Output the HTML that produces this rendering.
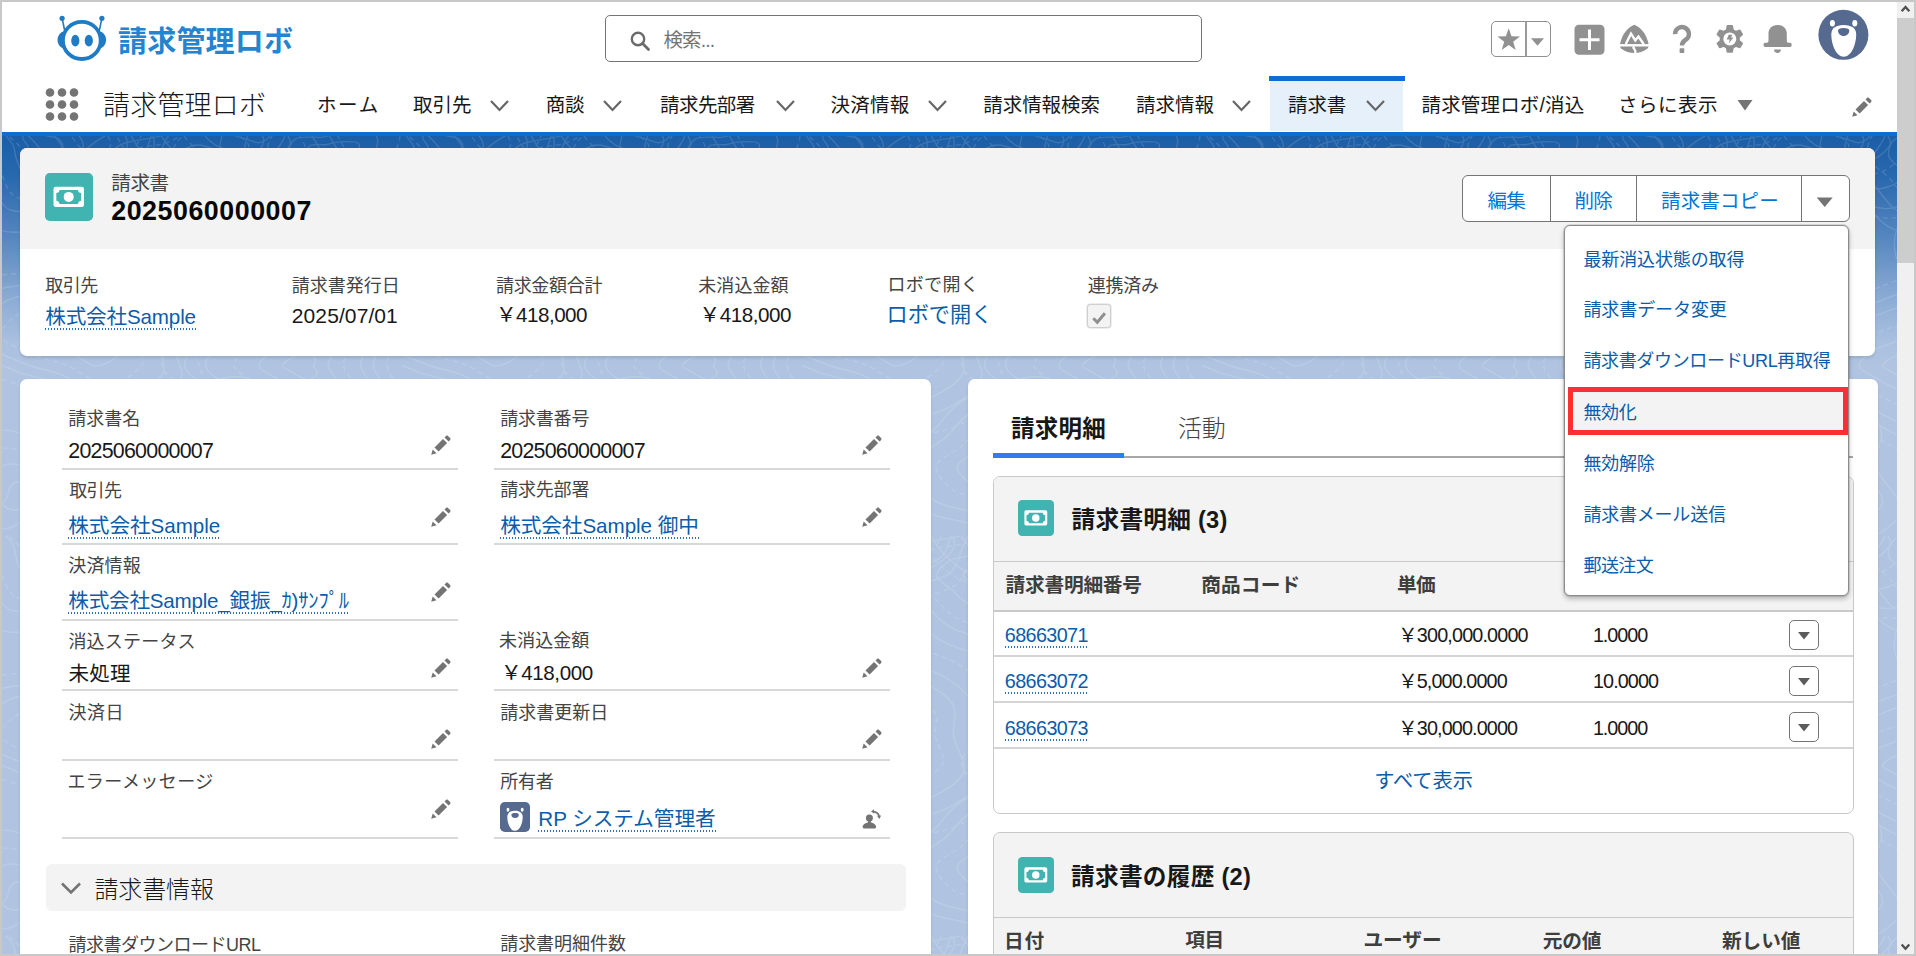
<!DOCTYPE html>
<html lang="ja">
<head>
<meta charset="utf-8">
<title>請求書 2025060000007 | 請求管理ロボ</title>
<style>

*{box-sizing:border-box;margin:0;padding:0}
html,body{width:1916px;height:956px;overflow:hidden;background:#fff}
body{font-family:"Liberation Sans","Noto Sans CJK JP",sans-serif;color:#181818;position:relative}
.abs{position:absolute}
.t{position:absolute;white-space:nowrap;line-height:1}
a{color:#0b5cab;text-decoration:none}
#frame{position:absolute;left:0;top:0;width:1916px;height:956px;border:2px solid #c8c8c8;pointer-events:none;z-index:100}
#hdr{position:absolute;left:2px;top:2px;width:1895px;height:130px;background:#fff}
#blueline{position:absolute;left:2px;top:132px;width:1895px;height:4px;background:#0b6dd6}
#bg{position:absolute;left:2px;top:136px;width:1895px;height:818px;background:linear-gradient(to bottom,#1b5ea6 0px,#2868ad 40px,#5486bf 100px,#8aaad4 160px,#a9c0df 205px,#b0c4e1 230px,#b0c4e1 100%)}
#sb{position:absolute;left:1897px;top:2px;width:17px;height:952px;background:#f0f0f0}
#sb .thumb{position:absolute;left:0;top:16px;width:17px;height:245px;background:#cdcdcd}
.card{position:absolute;background:#fff;border-radius:7px}
.lnk{color:#0b5cab;padding-bottom:2px;background-image:repeating-linear-gradient(90deg,#2f6fba 0,#2f6fba 1.4px,rgba(255,255,255,0) 1.4px,rgba(255,255,255,0) 3px);background-size:100% 2px;background-position:0 100%;background-repeat:no-repeat}
.ul{position:absolute;height:2px;background:#d8d8d8}

</style>
</head>
<body>
<div id="hdr"></div><div id="blueline"></div><div id="bg"></div>
<svg class="abs" style="left:2px;top:136px" width="1895" height="818" viewBox="0 0 1895 818"><defs><pattern id="tp" width="400" height="400" patternUnits="userSpaceOnUse"><g fill="none" stroke="#fff" stroke-width="1.300" opacity="0.130"><path d="M60.6 10.0 C60.2 12.3 55.6 14.2 53.2 16.4 C50.8 18.6 49.9 21.7 46.4 23.2 C43.0 24.7 35.6 26.7 32.4 25.5 C29.2 24.4 28.3 18.8 27.2 16.2 C26.0 13.6 26.8 12.6 25.7 10.0 C24.7 7.4 19.6 3.1 20.8 0.7 C22.0 -1.7 29.0 -4.2 33.0 -4.4 C37.0 -4.5 41.2 -1.3 44.9 -0.1 C48.7 1.0 53.0 0.7 55.6 2.4 C58.3 4.1 61.0 7.7 60.6 10.0"/><path d="M81.3 10.0 C80.5 14.7 71.2 18.4 66.4 22.8 C61.7 27.2 59.8 33.4 52.9 36.4 C46.0 39.5 31.3 43.4 24.8 41.1 C18.4 38.8 16.5 27.6 14.3 22.5 C12.1 17.3 13.5 15.2 11.4 10.0 C9.3 4.8 -0.8 -3.8 1.6 -8.6 C4.0 -13.4 17.9 -18.4 26.0 -18.7 C34.0 -19.0 42.3 -12.6 49.9 -10.3 C57.4 -8.0 66.1 -8.5 71.3 -5.2 C76.5 -1.8 82.1 5.3 81.3 10.0"/><path d="M108.4 10.0 C107.1 17.7 91.6 23.9 83.8 31.2 C75.9 38.5 72.8 48.8 61.3 53.8 C49.9 58.9 25.6 65.4 14.9 61.5 C4.2 57.6 1.1 39.2 -2.6 30.6 C-6.3 22.0 -3.8 18.6 -7.3 10.0 C-10.8 1.4 -27.6 -12.9 -23.6 -20.8 C-19.6 -28.7 3.5 -37.1 16.8 -37.6 C30.1 -38.1 43.9 -27.4 56.4 -23.6 C68.9 -19.9 83.2 -20.7 91.8 -15.1 C100.5 -9.5 109.8 2.3 108.4 10.0" stroke-dasharray="5 4"/><path d="M125.2 10.0 C123.5 19.6 104.3 27.3 94.5 36.4 C84.7 45.5 80.9 58.3 66.6 64.6 C52.3 70.8 22.0 78.9 8.7 74.1 C-4.5 69.3 -8.4 46.4 -13.0 35.7 C-17.7 25.0 -14.6 20.7 -18.9 10.0 C-23.3 -0.7 -44.2 -18.5 -39.2 -28.4 C-34.2 -38.2 -5.5 -48.7 11.1 -49.3 C27.7 -49.9 44.8 -36.6 60.4 -31.9 C76.0 -27.2 93.8 -28.3 104.6 -21.3 C115.4 -14.3 126.9 0.4 125.2 10.0"/><path d="M152.0 10.0 C149.8 22.6 124.5 32.8 111.6 44.7 C98.8 56.6 93.7 73.4 74.9 81.7 C56.2 89.9 16.4 100.6 -1.1 94.3 C-18.5 87.9 -23.6 57.8 -29.7 43.8 C-35.8 29.7 -31.7 24.0 -37.5 10.0 C-43.2 -4.0 -70.6 -27.4 -64.1 -40.4 C-57.5 -53.4 -19.8 -67.1 2.0 -67.9 C23.9 -68.7 46.4 -51.2 66.8 -45.0 C87.3 -38.9 110.6 -40.3 124.8 -31.1 C139.0 -21.9 154.2 -2.6 152.0 10.0"/><path d="M130.0 -30.0 C128.2 -27.4 123.3 -26.9 121.0 -24.7 C118.7 -22.5 119.5 -18.4 116.4 -16.8 C113.4 -15.2 106.3 -14.2 102.8 -15.2 C99.3 -16.3 97.7 -20.5 95.5 -23.0 C93.3 -25.4 90.2 -27.4 89.6 -30.0 C89.1 -32.6 89.8 -36.9 92.4 -38.5 C95.0 -40.2 101.4 -39.2 105.2 -39.8 C109.1 -40.3 111.4 -41.6 115.7 -41.7 C120.1 -41.8 128.9 -42.3 131.3 -40.3 C133.7 -38.4 131.7 -32.6 130.0 -30.0"/><path d="M148.4 -30.0 C145.1 -25.0 135.5 -24.0 131.1 -19.8 C126.8 -15.5 128.2 -7.6 122.4 -4.6 C116.5 -1.6 102.9 0.3 96.2 -1.6 C89.5 -3.6 86.3 -11.8 82.1 -16.5 C77.9 -21.2 71.9 -25.0 70.9 -30.0 C69.9 -35.0 71.2 -43.2 76.2 -46.4 C81.2 -49.5 93.4 -47.7 100.9 -48.8 C108.3 -49.8 112.6 -52.3 121.0 -52.5 C129.3 -52.7 146.4 -53.6 150.9 -49.8 C155.5 -46.1 151.7 -35.0 148.4 -30.0"/><path d="M173.6 -30.0 C168.1 -21.7 152.2 -20.0 145.0 -13.0 C137.9 -6.0 140.2 7.1 130.5 12.1 C120.8 17.1 98.2 20.3 87.1 17.0 C76.0 13.7 70.7 0.2 63.8 -7.6 C56.8 -15.4 46.8 -21.7 45.2 -30.0 C43.5 -38.3 45.6 -52.0 53.9 -57.2 C62.2 -62.3 82.5 -59.4 94.8 -61.1 C107.2 -62.8 114.3 -67.0 128.2 -67.3 C142.0 -67.6 170.3 -69.1 177.9 -62.9 C185.5 -56.7 179.1 -38.3 173.6 -30.0" stroke-dasharray="5 4"/><path d="M190.5 -30.0 C183.6 -19.5 163.5 -17.4 154.4 -8.5 C145.3 0.4 148.2 16.9 136.0 23.3 C123.7 29.6 95.1 33.7 81.0 29.5 C66.9 25.4 60.3 8.3 51.5 -1.6 C42.6 -11.6 30.0 -19.5 27.9 -30.0 C25.8 -40.5 28.5 -57.8 39.0 -64.4 C49.5 -70.9 75.1 -67.3 90.8 -69.4 C106.5 -71.5 115.5 -76.9 133.0 -77.2 C150.6 -77.6 186.4 -79.5 195.9 -71.6 C205.5 -63.8 197.5 -40.5 190.5 -30.0"/><path d="M215.3 -30.0 C206.3 -16.2 179.9 -13.5 168.0 -1.9 C156.1 9.7 159.9 31.4 144.0 39.7 C128.0 48.0 90.5 53.3 72.1 47.8 C53.6 42.4 45.0 20.1 33.4 7.1 C21.9 -5.9 5.4 -16.3 2.6 -30.0 C-0.1 -43.7 3.5 -66.4 17.2 -75.0 C30.9 -83.5 64.4 -78.7 84.9 -81.5 C105.4 -84.3 117.2 -91.3 140.1 -91.8 C163.0 -92.3 209.8 -94.7 222.4 -84.4 C234.9 -74.1 224.4 -43.8 215.3 -30.0"/><path d="M233.2 -30.0 C222.6 -13.9 191.8 -10.7 177.9 2.9 C164.0 16.5 168.4 41.8 149.7 51.5 C131.0 61.2 87.2 67.4 65.6 61.1 C44.1 54.7 34.0 28.6 20.4 13.4 C6.9 -1.8 -12.4 -14.0 -15.6 -30.0 C-18.7 -46.0 -14.6 -72.5 1.4 -82.6 C17.5 -92.6 56.7 -87.0 80.6 -90.3 C104.6 -93.5 118.4 -101.7 145.2 -102.3 C172.0 -102.8 226.8 -105.7 241.5 -93.7 C256.1 -81.6 243.8 -46.1 233.2 -30.0" stroke-dasharray="5 4"/><path d="M192.9 40.0 C191.9 42.3 192.5 43.3 191.5 45.6 C190.4 47.8 189.4 52.5 186.6 53.5 C183.7 54.5 177.5 52.8 174.4 51.6 C171.2 50.3 169.9 47.9 167.7 46.0 C165.4 44.1 161.2 42.1 161.0 40.0 C160.8 37.9 164.1 34.9 166.5 33.5 C169.0 32.0 172.5 32.4 175.8 31.3 C179.1 30.2 182.7 27.0 186.3 27.0 C189.9 27.1 196.3 29.4 197.4 31.6 C198.5 33.7 193.9 37.7 192.9 40.0"/><path d="M210.7 40.0 C208.4 45.6 209.9 47.9 207.4 53.3 C204.9 58.6 202.5 69.9 195.7 72.3 C188.9 74.7 174.1 70.6 166.6 67.6 C159.0 64.6 155.9 58.9 150.6 54.3 C145.3 49.7 135.2 45.0 134.7 40.0 C134.3 35.0 142.0 27.9 147.9 24.4 C153.7 21.0 162.0 21.8 169.9 19.2 C177.8 16.7 186.5 8.9 195.1 9.0 C203.7 9.1 218.8 14.8 221.5 19.9 C224.1 25.1 213.1 34.4 210.7 40.0"/><path d="M229.0 40.0 C225.3 48.9 227.7 52.6 223.7 61.2 C219.7 69.8 216.0 87.7 205.1 91.5 C194.2 95.3 170.6 88.8 158.6 84.0 C146.5 79.2 141.5 70.1 133.0 62.8 C124.5 55.4 108.4 47.9 107.7 40.0 C107.0 32.1 119.4 20.7 128.7 15.2 C138.1 9.6 151.3 11.0 163.9 6.9 C176.4 2.8 190.4 -9.6 204.1 -9.4 C217.8 -9.3 242.0 -0.3 246.2 8.0 C250.3 16.2 232.8 31.1 229.0 40.0" stroke-dasharray="5 4"/><path d="M240.0 40.0 C235.4 50.8 238.3 55.4 233.4 65.9 C228.6 76.4 224.0 98.3 210.7 103.0 C197.4 107.6 168.5 99.6 153.8 93.8 C139.1 87.9 132.9 76.8 122.6 67.8 C112.2 58.9 92.5 49.7 91.6 40.0 C90.8 30.3 105.9 16.4 117.3 9.6 C128.8 2.9 144.9 4.5 160.3 -0.5 C175.6 -5.5 192.7 -20.7 209.5 -20.4 C226.2 -20.2 255.8 -9.2 260.9 0.8 C266.0 10.9 244.5 29.2 240.0 40.0"/><path d="M256.2 40.0 C250.4 53.8 254.2 59.6 248.0 72.9 C241.8 86.3 235.9 114.2 219.0 120.1 C202.2 126.0 165.3 115.8 146.7 108.4 C128.0 100.9 120.1 86.8 107.0 75.4 C93.8 64.0 68.7 52.3 67.6 40.0 C66.5 27.7 85.8 10.0 100.3 1.4 C114.9 -7.2 135.4 -5.1 154.9 -11.5 C174.4 -17.9 196.1 -37.1 217.5 -36.9 C238.8 -36.6 276.4 -22.6 282.8 -9.8 C289.3 3.0 262.0 26.2 256.2 40.0"/><path d="M265.2 -10.0 C265.1 -7.0 269.5 -3.9 268.3 -1.1 C267.2 1.7 262.2 6.0 258.1 6.6 C254.0 7.3 248.1 4.2 243.7 2.9 C239.3 1.6 234.9 1.0 231.8 -1.2 C228.7 -3.3 224.7 -7.4 225.4 -10.0 C226.0 -12.6 232.8 -14.7 235.8 -16.9 C238.9 -19.0 240.0 -20.7 243.8 -22.7 C247.7 -24.6 254.9 -29.2 259.1 -28.6 C263.2 -28.0 267.7 -22.2 268.8 -19.1 C269.8 -16.0 265.3 -13.0 265.2 -10.0"/><path d="M281.6 -10.0 C281.4 -3.8 290.6 2.7 288.1 8.5 C285.6 14.2 275.4 23.2 266.9 24.6 C258.3 26.0 246.1 19.4 237.0 16.7 C227.9 14.0 218.6 12.8 212.2 8.3 C205.8 3.9 197.4 -4.6 198.8 -10.0 C200.2 -15.4 214.2 -19.9 220.6 -24.3 C227.0 -28.6 229.1 -32.2 237.2 -36.3 C245.2 -40.4 260.2 -49.9 268.8 -48.6 C277.5 -47.4 286.8 -35.3 289.0 -28.9 C291.1 -22.4 281.7 -16.2 281.6 -10.0"/><path d="M293.7 -10.0 C293.5 -1.4 306.1 7.6 302.7 15.5 C299.3 23.5 285.1 35.9 273.3 37.8 C261.5 39.8 244.6 30.7 232.0 27.0 C219.4 23.2 206.5 21.5 197.7 15.3 C188.9 9.2 177.2 -2.5 179.1 -10.0 C181.1 -17.5 200.4 -23.7 209.3 -29.7 C218.1 -35.8 221.1 -40.8 232.3 -46.4 C243.4 -52.0 264.1 -65.2 276.1 -63.5 C288.0 -61.7 301.0 -45.0 303.9 -36.1 C306.9 -27.2 293.9 -18.6 293.7 -10.0" stroke-dasharray="5 4"/><path d="M307.0 -10.0 C306.7 1.2 323.2 12.9 318.8 23.3 C314.3 33.7 295.8 49.9 280.4 52.4 C265.0 54.9 242.9 43.1 226.5 38.2 C210.0 33.4 193.2 31.1 181.8 23.1 C170.3 15.0 155.0 -0.2 157.6 -10.0 C160.1 -19.8 185.3 -27.8 196.9 -35.7 C208.4 -43.6 212.3 -50.2 226.9 -57.5 C241.4 -64.8 268.4 -82.0 284.0 -79.7 C299.6 -77.5 316.5 -55.7 320.3 -44.1 C324.2 -32.4 307.2 -21.2 307.0 -10.0"/><path d="M324.9 -10.0 C324.6 4.8 346.3 20.1 340.5 33.8 C334.6 47.5 310.2 68.8 290.0 72.1 C269.8 75.4 240.7 59.9 219.1 53.5 C197.4 47.0 175.3 44.1 160.2 33.5 C145.1 22.9 125.1 2.9 128.4 -10.0 C131.7 -22.9 164.9 -33.4 180.1 -43.8 C195.3 -54.3 200.5 -62.8 219.6 -72.5 C238.7 -82.1 274.2 -104.7 294.7 -101.7 C315.2 -98.8 337.5 -70.1 342.5 -54.8 C347.6 -39.5 325.3 -24.8 324.9 -10.0"/><path d="M333.6 -10.0 C333.2 6.5 357.4 23.6 350.9 38.9 C344.4 54.1 317.2 77.9 294.6 81.6 C272.1 85.2 239.6 68.0 215.5 60.8 C191.4 53.6 166.7 50.3 149.8 38.5 C133.0 26.7 110.6 4.4 114.3 -10.0 C118.0 -24.4 155.1 -36.1 172.0 -47.8 C189.0 -59.4 194.7 -68.9 216.0 -79.7 C237.3 -90.4 277.0 -115.6 299.9 -112.3 C322.7 -109.0 347.6 -77.1 353.2 -60.0 C358.8 -42.9 334.0 -26.5 333.6 -10.0" stroke-dasharray="5 4"/><path d="M354.7 20.0 C352.7 23.2 346.8 24.1 344.0 26.8 C341.2 29.4 341.6 34.3 337.8 36.1 C334.1 37.9 325.8 38.6 321.5 37.3 C317.3 36.1 315.2 31.5 312.3 28.6 C309.4 25.7 304.6 23.2 303.9 20.0 C303.2 16.8 304.8 11.4 308.3 9.5 C311.7 7.6 319.7 9.2 324.4 8.6 C329.2 8.0 331.6 6.1 336.9 5.9 C342.2 5.7 353.2 5.0 356.2 7.3 C359.1 9.7 356.7 16.8 354.7 20.0"/><path d="M370.9 20.0 C367.5 25.4 357.8 26.8 353.1 31.2 C348.5 35.6 349.2 43.7 343.0 46.6 C336.8 49.6 323.0 50.8 316.0 48.7 C309.0 46.6 305.6 39.0 300.7 34.2 C295.8 29.4 287.9 25.3 286.8 20.0 C285.6 14.7 288.3 5.7 294.0 2.6 C299.7 -0.6 312.9 2.1 320.8 1.1 C328.7 0.1 332.6 -3.1 341.4 -3.4 C350.2 -3.7 368.4 -4.9 373.3 -1.0 C378.3 2.9 374.3 14.6 370.9 20.0"/><path d="M391.0 20.0 C386.0 28.0 371.4 30.1 364.5 36.7 C357.5 43.3 358.6 55.4 349.4 59.7 C340.1 64.1 319.6 65.9 309.1 62.8 C298.6 59.7 293.6 48.3 286.3 41.2 C279.1 34.0 267.2 27.9 265.5 20.0 C263.9 12.1 267.9 -1.3 276.3 -6.0 C284.8 -10.7 304.5 -6.7 316.2 -8.2 C328.0 -9.7 333.9 -14.4 347.0 -14.9 C360.1 -15.4 387.3 -17.1 394.6 -11.3 C401.9 -5.5 396.0 12.0 391.0 20.0" stroke-dasharray="5 4"/><path d="M412.2 20.0 C405.4 30.8 385.8 33.6 376.4 42.5 C367.1 51.4 368.5 67.7 356.1 73.5 C343.7 79.4 316.0 81.9 301.9 77.7 C287.7 73.5 280.9 58.1 271.2 48.5 C261.4 38.9 245.4 30.6 243.1 20.0 C240.9 9.4 246.3 -8.7 257.7 -15.0 C269.1 -21.4 295.6 -16.0 311.5 -18.0 C327.3 -20.0 335.3 -26.3 352.9 -27.0 C370.5 -27.7 407.2 -30.0 417.1 -22.2 C426.9 -14.3 418.9 9.2 412.2 20.0"/><path d="M435.3 20.0 C426.6 33.8 401.5 37.4 389.5 48.8 C377.6 60.3 379.4 81.1 363.4 88.6 C347.5 96.1 312.1 99.3 294.0 94.0 C275.8 88.6 267.1 68.9 254.6 56.5 C242.0 44.2 221.5 33.6 218.7 20.0 C215.8 6.4 222.7 -16.8 237.3 -24.9 C251.9 -33.0 285.9 -26.2 306.2 -28.7 C326.6 -31.3 336.8 -39.4 359.4 -40.3 C381.9 -41.1 428.9 -44.1 441.6 -34.1 C454.3 -24.0 444.0 6.2 435.3 20.0"/><path d="M100.0 200.0 C100.5 203.4 104.3 207.8 102.4 210.9 C100.6 213.9 93.5 218.2 88.9 218.2 C84.3 218.3 78.8 212.8 74.6 211.0 C70.5 209.3 68.2 209.6 64.0 207.7 C59.9 205.9 50.3 203.0 49.5 200.0 C48.8 197.0 55.2 192.0 59.3 190.0 C63.4 187.9 69.2 188.5 73.9 187.6 C78.7 186.6 83.5 183.6 87.8 184.1 C92.0 184.6 97.4 187.9 99.5 190.6 C101.5 193.2 99.5 196.6 100.0 200.0"/><path d="M112.9 200.0 C113.7 205.5 119.8 212.8 116.8 217.8 C113.7 222.8 102.2 229.9 94.6 229.9 C87.0 229.9 78.0 220.9 71.2 218.1 C64.4 215.2 60.7 215.7 53.8 212.7 C46.9 209.7 31.3 204.9 30.0 200.0 C28.7 195.1 39.4 186.9 46.0 183.5 C52.7 180.1 62.3 181.2 70.0 179.6 C77.8 178.0 85.8 173.0 92.7 173.9 C99.7 174.7 108.6 180.2 111.9 184.5 C115.3 188.9 112.1 194.5 112.9 200.0"/><path d="M133.5 200.0 C134.8 209.0 144.9 220.9 139.9 229.0 C135.0 237.1 116.1 248.6 103.7 248.7 C91.4 248.8 76.7 234.1 65.7 229.4 C54.6 224.8 48.5 225.6 37.3 220.7 C26.1 215.8 0.7 207.9 -1.4 200.0 C-3.5 192.1 13.8 178.7 24.7 173.2 C35.5 167.7 51.1 169.4 63.8 166.7 C76.5 164.1 89.4 156.1 100.8 157.4 C112.1 158.8 126.6 167.7 132.0 174.8 C137.5 181.9 132.2 191.0 133.5 200.0" stroke-dasharray="5 4"/><path d="M151.6 200.0 C153.4 212.1 166.8 228.0 160.2 238.8 C153.5 249.7 128.3 265.1 111.8 265.2 C95.2 265.2 75.6 245.6 60.8 239.4 C46.0 233.1 37.9 234.2 22.9 227.7 C8.0 221.1 -26.1 210.6 -28.9 200.0 C-31.7 189.4 -8.6 171.6 6.0 164.1 C20.5 156.7 41.4 159.0 58.3 155.5 C75.3 152.0 92.5 141.2 107.8 143.0 C123.0 144.8 142.3 156.8 149.6 166.3 C156.9 175.8 149.8 187.9 151.6 200.0"/><path d="M167.2 200.0 C169.4 214.7 185.7 234.1 177.6 247.3 C169.6 260.5 138.9 279.3 118.7 279.4 C98.5 279.5 74.7 255.6 56.6 248.0 C38.6 240.4 28.7 241.7 10.5 233.7 C-7.8 225.7 -49.2 212.9 -52.6 200.0 C-56.1 187.1 -27.9 165.4 -10.2 156.3 C7.5 147.3 32.9 150.1 53.6 145.8 C74.2 141.5 95.3 128.4 113.8 130.6 C132.3 132.8 155.9 147.4 164.8 158.9 C173.7 170.5 165.1 185.3 167.2 200.0"/><path d="M186.2 200.0 C188.8 217.9 208.7 241.5 198.9 257.6 C189.0 273.7 151.7 296.5 127.1 296.6 C102.5 296.8 73.5 267.7 51.5 258.4 C29.6 249.1 17.5 250.7 -4.7 241.0 C-26.8 231.3 -77.3 215.7 -81.5 200.0 C-85.7 184.3 -51.3 157.8 -29.8 146.8 C-8.2 135.8 22.7 139.2 47.8 134.0 C73.0 128.8 98.6 112.9 121.2 115.5 C143.7 118.2 172.4 135.9 183.2 150.0 C194.0 164.1 183.6 182.1 186.2 200.0" stroke-dasharray="5 4"/><path d="M311.7 230.0 C312.0 232.3 316.1 235.0 315.2 237.4 C314.4 239.7 310.2 243.8 306.9 244.1 C303.6 244.4 298.5 240.7 295.5 239.3 C292.4 237.9 291.0 237.1 288.6 235.5 C286.1 234.0 281.1 232.0 280.8 230.0 C280.4 228.0 284.1 225.2 286.5 223.5 C288.9 221.8 291.7 220.9 295.0 219.8 C298.4 218.7 303.3 216.3 306.4 216.9 C309.4 217.5 312.5 221.3 313.4 223.5 C314.3 225.7 311.4 227.7 311.7 230.0"/><path d="M326.1 230.0 C326.7 235.2 335.8 241.2 334.0 246.5 C332.2 251.7 322.6 260.7 315.3 261.4 C307.9 262.1 296.7 253.9 289.9 250.7 C283.1 247.5 280.0 245.8 274.5 242.3 C269.1 238.9 258.0 234.5 257.2 230.0 C256.4 225.5 264.6 219.2 269.9 215.4 C275.2 211.7 281.6 209.8 289.0 207.4 C296.3 204.9 307.4 199.5 314.2 200.9 C321.0 202.2 328.0 210.6 329.9 215.5 C331.9 220.4 325.4 224.8 326.1 230.0"/><path d="M341.4 230.0 C342.4 238.2 356.8 247.8 353.9 256.1 C351.1 264.4 335.9 278.7 324.3 279.8 C312.6 280.9 294.8 267.9 284.0 262.8 C273.2 257.8 268.2 255.1 259.6 249.6 C250.9 244.1 233.3 237.1 232.1 230.0 C230.9 222.9 243.9 212.9 252.3 206.9 C260.7 200.9 270.8 197.9 282.5 194.1 C294.2 190.2 311.7 181.6 322.5 183.8 C333.4 185.9 344.4 199.3 347.5 207.0 C350.7 214.7 340.3 221.8 341.4 230.0" stroke-dasharray="5 4"/><path d="M358.7 230.0 C360.2 241.6 380.6 255.3 376.5 267.1 C372.5 278.8 351.0 299.0 334.4 300.6 C317.9 302.2 292.6 283.7 277.3 276.6 C262.0 269.4 254.9 265.5 242.7 257.8 C230.4 250.0 205.4 240.1 203.6 230.0 C201.9 219.9 220.4 205.7 232.3 197.2 C244.2 188.7 258.5 184.5 275.2 179.0 C291.8 173.6 316.6 161.4 332.0 164.4 C347.3 167.5 363.0 186.4 367.4 197.4 C371.9 208.3 357.2 218.4 358.7 230.0"/><path d="M371.5 230.0 C373.4 244.2 398.2 260.8 393.2 275.2 C388.3 289.5 362.1 314.1 341.9 316.1 C321.8 318.0 291.0 295.5 272.3 286.8 C253.7 278.1 245.1 273.3 230.1 263.9 C215.1 254.4 184.7 242.3 182.6 230.0 C180.5 217.7 202.9 200.4 217.5 190.0 C232.0 179.7 249.5 174.5 269.7 167.9 C290.0 161.2 320.2 146.3 339.0 150.1 C357.7 153.8 376.7 176.9 382.1 190.2 C387.6 203.5 369.7 215.8 371.5 230.0"/><path d="M385.2 230.0 C387.4 246.9 417.0 266.7 411.1 283.8 C405.2 300.9 374.0 330.2 350.0 332.5 C326.0 334.8 289.2 308.0 267.0 297.6 C244.8 287.3 234.6 281.6 216.7 270.3 C198.9 259.1 162.6 244.7 160.1 230.0 C157.6 215.3 184.3 194.7 201.7 182.4 C219.0 170.0 239.8 163.9 263.9 156.0 C288.0 148.0 324.1 130.3 346.4 134.8 C368.7 139.2 391.4 166.7 397.9 182.6 C404.3 198.5 383.0 213.1 385.2 230.0" stroke-dasharray="5 4"/><path d="M215.0 330.0 C215.7 332.9 221.2 337.0 220.1 339.7 C218.9 342.5 212.4 346.2 208.1 346.5 C203.7 346.9 198.4 343.3 194.2 342.0 C189.9 340.6 185.5 340.4 182.6 338.5 C179.6 336.5 176.1 332.6 176.6 330.0 C177.1 327.4 182.9 325.4 185.6 323.0 C188.4 320.7 189.3 317.9 193.2 316.0 C197.0 314.2 205.0 310.9 208.8 312.0 C212.6 313.0 214.9 319.3 215.9 322.3 C217.0 325.3 214.3 327.1 215.0 330.0"/><path d="M228.6 330.0 C230.0 335.6 240.5 343.3 238.3 348.6 C236.1 353.8 223.6 360.9 215.4 361.6 C207.1 362.3 197.0 355.5 188.8 352.9 C180.7 350.3 172.3 350.0 166.7 346.1 C161.1 342.3 154.4 334.9 155.4 330.0 C156.4 325.1 167.2 321.1 172.5 316.7 C177.8 312.2 179.6 306.8 187.0 303.3 C194.4 299.8 209.5 293.6 216.8 295.6 C224.0 297.6 228.5 309.5 230.5 315.2 C232.4 321.0 227.3 324.4 228.6 330.0"/><path d="M242.2 330.0 C244.1 338.2 259.7 349.6 256.4 357.3 C253.2 365.1 234.8 375.4 222.7 376.5 C210.5 377.5 195.5 367.5 183.6 363.7 C171.6 359.9 159.2 359.4 151.0 353.8 C142.7 348.1 132.9 337.2 134.3 330.0 C135.8 322.8 151.8 317.0 159.5 310.4 C167.3 303.9 170.0 295.9 180.8 290.7 C191.7 285.5 214.0 276.4 224.7 279.4 C235.4 282.3 241.9 299.8 244.8 308.3 C247.7 316.7 240.2 321.8 242.2 330.0" stroke-dasharray="5 4"/><path d="M259.7 330.0 C262.4 341.6 284.5 357.7 279.9 368.7 C275.3 379.7 249.3 394.3 232.1 395.8 C214.9 397.3 193.7 383.1 176.7 377.7 C159.8 372.3 142.2 371.6 130.6 363.6 C118.9 355.7 105.0 340.2 107.0 330.0 C109.0 319.8 131.7 311.5 142.7 302.3 C153.7 293.0 157.5 281.7 172.9 274.3 C188.2 267.0 219.8 254.1 235.0 258.3 C250.1 262.4 259.4 287.3 263.5 299.3 C267.6 311.2 257.0 318.4 259.7 330.0"/><path d="M273.6 330.0 C276.9 344.3 304.1 364.2 298.5 377.7 C292.8 391.2 260.7 409.3 239.5 411.1 C218.3 413.0 192.2 395.4 171.3 388.8 C150.5 382.2 128.7 381.3 114.4 371.5 C100.1 361.7 82.9 342.6 85.4 330.0 C87.9 317.4 115.9 307.2 129.4 295.8 C142.9 284.4 147.6 270.4 166.6 261.4 C185.5 252.4 224.5 236.5 243.1 241.6 C261.7 246.7 273.2 277.4 278.2 292.1 C283.3 306.8 270.2 315.7 273.6 330.0"/><path d="M41.8 360.0 C41.7 362.3 36.6 365.1 33.7 366.6 C30.7 368.1 27.7 367.5 24.3 368.8 C20.9 370.1 16.9 374.2 13.0 374.3 C9.2 374.3 2.4 371.5 1.1 369.1 C-0.1 366.8 4.7 362.6 5.7 360.0 C6.7 357.4 5.8 356.0 7.0 353.7 C8.3 351.4 10.1 347.0 13.2 346.1 C16.3 345.2 22.2 347.2 25.7 348.3 C29.2 349.5 31.7 351.1 34.4 353.0 C37.1 355.0 41.9 357.7 41.8 360.0"/><path d="M69.8 360.0 C69.5 365.2 57.8 371.7 51.2 375.1 C44.5 378.5 37.7 377.2 29.8 380.1 C22.0 383.1 12.9 392.5 4.1 392.6 C-4.7 392.7 -20.2 386.3 -23.0 380.8 C-25.8 375.4 -14.9 365.9 -12.6 360.0 C-10.4 354.1 -12.4 351.0 -9.6 345.7 C-6.7 340.4 -2.6 330.3 4.5 328.2 C11.6 326.2 24.9 330.7 33.0 333.3 C41.1 336.0 46.7 339.6 52.8 344.1 C59.0 348.5 70.1 354.8 69.8 360.0"/><path d="M93.8 360.0 C93.4 367.7 76.1 377.4 66.2 382.4 C56.3 387.4 46.2 385.5 34.5 389.9 C22.9 394.2 9.5 408.1 -3.5 408.3 C-16.6 408.5 -39.6 398.9 -43.8 390.9 C-47.9 382.8 -31.7 368.7 -28.4 360.0 C-25.1 351.3 -28.1 346.6 -23.8 338.8 C-19.6 330.9 -13.5 315.9 -3.0 312.9 C7.6 309.8 27.3 316.6 39.3 320.5 C51.2 324.4 59.6 329.8 68.7 336.4 C77.8 343.0 94.2 352.3 93.8 360.0" stroke-dasharray="5 4"/><path d="M122.0 360.0 C121.4 370.6 97.5 384.1 83.9 390.9 C70.2 397.8 56.2 395.3 40.1 401.3 C24.0 407.2 5.5 426.5 -12.5 426.8 C-30.6 427.0 -62.4 413.8 -68.1 402.7 C-73.8 391.5 -51.4 372.0 -46.9 360.0 C-42.3 348.0 -46.4 341.5 -40.6 330.7 C-34.7 319.8 -26.3 299.1 -11.7 294.9 C2.8 290.7 30.1 300.0 46.6 305.4 C63.1 310.8 74.7 318.3 87.3 327.4 C99.8 336.5 122.5 349.4 122.0 360.0"/><path d="M406.0 120.0 C404.3 123.1 397.1 124.4 393.9 126.8 C390.8 129.2 390.7 132.8 387.0 134.4 C383.4 136.0 376.0 137.3 372.1 136.3 C368.1 135.2 366.0 130.8 363.2 128.1 C360.5 125.4 356.2 123.1 355.4 120.0 C354.5 116.9 354.8 111.2 358.0 109.3 C361.2 107.4 369.8 108.9 374.5 108.7 C379.1 108.5 380.8 108.2 385.8 108.2 C390.7 108.1 400.8 106.3 404.2 108.3 C407.5 110.3 407.7 116.9 406.0 120.0"/><path d="M425.2 120.0 C422.2 125.3 409.7 127.6 404.2 131.7 C398.8 135.9 398.5 142.3 392.2 145.0 C385.9 147.8 373.1 150.1 366.2 148.3 C359.3 146.5 355.7 138.8 350.9 134.1 C346.0 129.4 338.7 125.4 337.2 120.0 C335.6 114.6 336.2 104.7 341.7 101.5 C347.3 98.2 362.3 100.6 370.4 100.3 C378.4 99.9 381.4 99.5 390.0 99.4 C398.6 99.3 416.1 96.2 422.0 99.7 C427.9 103.1 428.1 114.7 425.2 120.0"/><path d="M455.9 120.0 C450.9 129.0 429.9 132.7 420.7 139.7 C411.5 146.7 411.1 157.4 400.5 162.0 C389.8 166.7 368.4 170.6 356.8 167.5 C345.3 164.5 339.2 151.6 331.1 143.7 C323.0 135.8 310.6 129.1 308.1 120.0 C305.5 110.9 306.4 94.4 315.7 88.9 C325.0 83.3 350.3 87.5 363.9 86.9 C377.4 86.3 382.4 85.6 396.9 85.4 C411.3 85.2 440.7 80.1 450.5 85.8 C460.4 91.6 460.8 111.0 455.9 120.0" stroke-dasharray="5 4"/><path d="M470.8 120.0 C464.8 130.7 439.8 135.2 428.7 143.6 C417.7 152.0 417.3 164.7 404.5 170.3 C391.8 175.8 366.1 180.5 352.3 176.9 C338.4 173.2 331.2 157.8 321.5 148.4 C311.7 138.9 297.0 130.9 293.9 120.0 C290.8 109.1 291.9 89.3 303.1 82.7 C314.2 76.1 344.5 81.1 360.7 80.4 C376.9 79.7 382.9 78.8 400.2 78.6 C417.5 78.4 452.6 72.2 464.4 79.1 C476.2 86.0 476.7 109.3 470.8 120.0"/></g></pattern></defs><rect width="1895" height="818" fill="url(#tp)"/></svg>
<div id="sb"><div class="thumb"></div>
<svg class="abs" style="left:0;top:0" width="17" height="17" viewBox="0 0 17 17"><path d="M4.700 9.300 L8.500 5 L12.300 9.300" fill="none" stroke="#505050" stroke-width="2.300"/></svg>
<svg class="abs" style="left:0;top:936px" width="17" height="17" viewBox="0 0 17 17"><path d="M4.700 6.500 L8.500 10.800 L12.300 6.500" fill="none" stroke="#505050" stroke-width="2.300"/></svg>
</div>
<svg class="abs" style="left:54px;top:12px" width="56" height="52" viewBox="54 12 56 52">
<g fill="#1f7cc4" stroke="none"><ellipse cx="64.500" cy="40" rx="7" ry="8.500"/><ellipse cx="99.100" cy="40" rx="7" ry="8.500"/><circle cx="62.100" cy="18.300" r="2.600"/><circle cx="101.900" cy="18.300" r="2.600"/></g>
<g stroke="#1f7cc4" stroke-width="1.600" fill="none"><path d="M62.100 18.300 L64.800 31"/><path d="M101.900 18.300 L99.200 31"/></g>
<ellipse cx="81.800" cy="40.400" rx="18.900" ry="18.600" fill="#fff" stroke="#1f7cc4" stroke-width="3.800"/>
<ellipse cx="75.300" cy="40.700" rx="4.100" ry="5.900" fill="#1f7cc4"/><ellipse cx="88.800" cy="40.700" rx="4.100" ry="5.900" fill="#1f7cc4"/></svg>
<div class="abs" style="left:605px;top:15px;width:597px;height:47px;border:1px solid #747474;border-radius:5px;background:#fff"></div>
<svg class="abs" style="left:629px;top:30px" width="22" height="22" viewBox="0 0 22 22"><circle cx="9" cy="9" r="6.200" fill="none" stroke="#6b6b6b" stroke-width="2.400"/><path d="M13.600 13.600 L19.500 19.500" stroke="#6b6b6b" stroke-width="2.800" stroke-linecap="round"/></svg>
<svg class="abs" style="left:44px;top:86.500px" width="36" height="36" viewBox="0 0 36 36" fill="#747474">
<circle cx="6" cy="5.500" r="4.300"/><circle cx="18" cy="5.500" r="4.300"/><circle cx="30" cy="5.500" r="4.300"/>
<circle cx="6" cy="17.500" r="4.300"/><circle cx="18" cy="17.500" r="4.300"/><circle cx="30" cy="17.500" r="4.300"/>
<circle cx="6" cy="29.500" r="4.300"/><circle cx="18" cy="29.500" r="4.300"/><circle cx="30" cy="29.500" r="4.300"/></svg>
<div class="abs" style="left:1270px;top:78px;width:133px;height:53px;background:#e5f0fb"></div>
<div class="abs" style="left:1269px;top:76px;width:136px;height:5px;background:#0d6dd4"></div>
<svg class="abs" style="left:0;top:0" width="1897" height="135" viewBox="0 0 1897 135" fill="none" stroke="#666" stroke-width="2.200">
<path d="M491 101 L499.500 110 L508 101"/><path d="M604 101 L612.500 110 L621 101"/><path d="M777 101 L785.500 110 L794 101"/><path d="M929 101 L937.500 110 L946 101"/><path d="M1233 101 L1241.500 110 L1250 101"/><path d="M1367 101 L1375.500 110 L1384 101"/>
<path d="M1737.500 100 L1752.500 100 L1745 110.500 Z" fill="#747474" stroke="none"/></svg>
<!-- HEADER ICONS -->
<div class="abs" style="left:1491px;top:21px;width:60px;height:36px;border:1px solid #8f8f8f;border-radius:5px;background:#fff"></div>
<div class="abs" style="left:1525px;top:21px;width:2px;height:36px;background:#9a9a9a"></div>
<svg class="abs" style="left:1480px;top:5px" width="400" height="65" viewBox="1480 5 400 65">
<path d="M1508.7 28.2 L1511.5 36.3 L1520 36.5 L1513.2 41.7 L1515.7 49.9 L1508.7 45 L1501.7 49.9 L1504.2 41.7 L1497.4 36.5 L1505.9 36.3 Z" fill="#919191"/>
<path d="M1531 38.2 L1544 38.2 L1537.500 45.8 Z" fill="#919191"/>
<rect x="1574.500" y="24.800" width="30" height="30" rx="4.500" fill="#919191"/>
<path d="M1579.500 39.800 H1599.500 M1589.500 29.500 V50" stroke="#fff" stroke-width="3" fill="none"/>
<!-- trailhead -->
<path d="M1634.300 24.800 C1641 27.500 1646.500 34 1648.700 44.500 C1648.900 46 1648.500 47.200 1647.500 48.500 C1643.500 51.500 1639 53 1634.300 53 C1629.600 53 1625.100 51.500 1621.100 48.500 C1620.100 47.200 1619.700 46 1619.900 44.500 C1622.100 34 1627.600 27.500 1634.300 24.800 Z" fill="#919191"/>
<path d="M1619 45.300 H1650" stroke="#fff" stroke-width="2.400" fill="none"/>
<path d="M1625.800 44 L1631 33.600 L1635.300 40.400 L1638.400 36.600 L1643.800 44.200" stroke="#fff" stroke-width="2.400" fill="none" stroke-linejoin="miter"/>
<path d="M1633.800 46 C1632 48.800 1636.800 49.300 1635.200 53.500" stroke="#fff" stroke-width="2.300" fill="none"/>
<!-- question -->
<path d="M1675.100 34.200 A6.900 6.900 0 1 1 1686.600 39.100 C1683.600 41.200 1682 42.300 1682 45.400" stroke="#919191" stroke-width="4.400" fill="none"/>
<rect x="1679.600" y="48.300" width="4.700" height="4.700" rx="0.800" fill="#919191"/>
<!-- gear -->
<path d="M1726.70 30.13 L1727.50 26.00 L1732.10 26.00 L1732.90 30.13 L1735.84 31.83 L1739.82 30.46 L1742.12 34.44 L1738.94 37.20 L1738.94 40.60 L1742.12 43.36 L1739.82 47.34 L1735.84 45.97 L1732.90 47.67 L1732.10 51.80 L1727.50 51.80 L1726.70 47.67 L1723.76 45.97 L1719.78 47.34 L1717.48 43.36 L1720.66 40.60 L1720.66 37.20 L1717.48 34.44 L1719.78 30.46 L1723.76 31.83 Z" fill="#919191" stroke="#919191" stroke-width="1.800" stroke-linejoin="round"/>
<circle cx="1729.800" cy="38.900" r="6.500" fill="#fff"/>
<path d="M1728.700 34.800 L1732.300 34.800 L1731 37.600 L1733.400 37.600 L1728.700 43.400 L1729.700 39.500 L1726.700 39.500 Z" fill="#919191"/>
<!-- bell -->
<path d="M1777.600 24.900 C1783.800 24.900 1786.800 29 1786.800 33.500 L1786.800 40.500 C1786.800 42 1787.500 42.800 1789 42.800 L1790 42.800 C1791 42.800 1791.600 43.500 1791.600 44.500 L1791.600 45.300 C1791.600 46.300 1791 46.900 1790 46.900 L1765.200 46.900 C1764.200 46.900 1763.600 46.300 1763.600 45.300 L1763.600 44.500 C1763.600 43.500 1764.200 42.800 1765.200 42.800 L1766.200 42.800 C1767.700 42.800 1768.500 42 1768.500 40.500 L1768.500 33.500 C1768.500 29 1771.500 24.900 1777.600 24.900 Z" fill="#919191"/>
<path d="M1774 49.500 H1781 C1781 51.500 1779.500 53 1777.500 53 C1775.500 53 1774 51.500 1774 49.500 Z" fill="#919191"/>
<!-- avatar -->
<circle cx="1843.400" cy="34.800" r="25" fill="#556a8e"/>
<ellipse cx="1832.400" cy="23.200" rx="2.500" ry="3.300" fill="#fff"/><ellipse cx="1854.800" cy="23.200" rx="2.500" ry="3.300" fill="#fff"/>
<path d="M1843.700 25.100 C1852 25.100 1856.200 28.500 1856.200 34.500 C1856.200 44 1851.500 56.700 1843.700 56.700 C1835.900 56.700 1831.300 44 1831.300 34.500 C1831.300 28.500 1835.400 25.100 1843.700 25.100 Z" fill="#fff"/>
<path d="M1838 30.800 C1838 29 1840 28.100 1843.600 28.100 C1847.200 28.100 1849.300 29 1849.300 30.800 C1849.300 33.500 1846.800 36.100 1843.600 36.100 C1840.400 36.100 1838 33.500 1838 30.800 Z" fill="#556a8e"/>
</svg>
<!-- nav pencil -->
<svg class="abs" style="left:1851.700px;top:97px" width="20" height="20" viewBox="0 0 20 20" fill="#747474"><path d="M0.200 19.800 L1.700 14.500 L5.500 18.300 Z"/><path d="M3.500 12.400 L12 3.900 L16.100 8 L7.600 16.500 Z"/><path d="M13.500 2.400 L15 0.900 C15.600 0.300 16.400 0.300 17 0.900 L19.100 3 C19.700 3.600 19.700 4.400 19.100 5 L17.600 6.500 Z"/></svg>

<div class="card" style="left:20px;top:148px;width:1855px;height:208px;box-shadow:0 2px 3px rgba(0,0,0,.12)"></div>
<div class="abs" style="left:20px;top:148px;width:1855px;height:101px;background:#f3f3f3;border-radius:7px 7px 0 0"></div>
<svg class="abs" style="left:45px;top:172.5px" width="48" height="48" viewBox="0 0 48 48"><rect width="48" height="48" rx="4.7" fill="#41b3b0"/><rect x="8.500" y="13.800" width="30.500" height="20.200" rx="2.200" fill="#fff"/><path d="M14.500 16.900 H33 C33 18.600 34.400 20 36.200 20 V27.800 C34.400 27.800 33 29.200 33 31 H14.500 C14.500 29.200 13.100 27.800 11.300 27.800 V20 C13.100 20 14.500 18.600 14.500 16.900 Z" fill="#41b3b0"/><circle cx="23.700" cy="23.900" r="5" fill="#fff"/></svg>
<div class="abs" style="left:1462px;top:175px;width:388px;height:47px;border:1px solid #747474;border-radius:6px;background:#fff"></div>
<div class="abs" style="left:1550px;top:175px;width:1px;height:47px;background:#747474"></div>
<div class="abs" style="left:1636px;top:175px;width:1px;height:47px;background:#747474"></div>
<div class="abs" style="left:1801px;top:175px;width:1px;height:47px;background:#747474"></div>
<svg class="abs" style="left:1815px;top:194px" width="20" height="16" viewBox="0 0 20 16"><path d="M1.700 3.400 L17.700 3.400 L9.700 13 Z" fill="#747474"/></svg>
<div class="abs" style="left:1087px;top:304px;width:24px;height:24px;border:1px solid #cfcfcf;border-radius:3.5px;background:#f3f3f3;box-shadow:0 0 0 .5px #dcdcdc"></div>
<svg class="abs" style="left:1087px;top:304px" width="24" height="24" viewBox="0 0 24 24"><path d="M6.300 14.300 L10.300 18.300 L17.900 9.200" stroke="#8f8f8f" stroke-width="3" fill="none"/></svg>
<div class="card" style="left:20px;top:379px;width:911px;height:600px;box-shadow:0 2px 3px rgba(0,0,0,.12)"></div>
<div class="ul" style="left:62px;top:468px;width:396px"></div>
<div class="ul" style="left:494px;top:468px;width:396px"></div>
<div class="ul" style="left:62px;top:543px;width:396px"></div>
<div class="ul" style="left:494px;top:543px;width:396px"></div>
<div class="ul" style="left:62px;top:619px;width:396px"></div>
<div class="ul" style="left:62px;top:689px;width:396px"></div>
<div class="ul" style="left:494px;top:689px;width:396px"></div>
<div class="ul" style="left:62px;top:759px;width:396px"></div>
<div class="ul" style="left:494px;top:759px;width:396px"></div>
<div class="ul" style="left:62px;top:837px;width:396px"></div>
<div class="ul" style="left:494px;top:837px;width:396px"></div>
<svg class="abs" style="left:430.8px;top:435px" width="20" height="20" viewBox="0 0 20 20" fill="#747474"><path d="M0.200 19.800 L1.700 14.500 L5.500 18.300 Z"/><path d="M3.500 12.400 L12 3.900 L16.100 8 L7.600 16.500 Z"/><path d="M13.500 2.400 L15 0.900 C15.600 0.300 16.400 0.300 17 0.900 L19.100 3 C19.700 3.600 19.700 4.400 19.100 5 L17.600 6.500 Z"/></svg>
<svg class="abs" style="left:430.8px;top:507px" width="20" height="20" viewBox="0 0 20 20" fill="#747474"><path d="M0.200 19.800 L1.700 14.500 L5.500 18.300 Z"/><path d="M3.500 12.400 L12 3.900 L16.100 8 L7.600 16.500 Z"/><path d="M13.500 2.400 L15 0.900 C15.600 0.300 16.400 0.300 17 0.900 L19.100 3 C19.700 3.600 19.700 4.400 19.100 5 L17.600 6.500 Z"/></svg>
<svg class="abs" style="left:430.8px;top:582px" width="20" height="20" viewBox="0 0 20 20" fill="#747474"><path d="M0.200 19.800 L1.700 14.500 L5.500 18.300 Z"/><path d="M3.500 12.400 L12 3.900 L16.100 8 L7.600 16.500 Z"/><path d="M13.500 2.400 L15 0.900 C15.600 0.300 16.400 0.300 17 0.900 L19.100 3 C19.700 3.600 19.700 4.400 19.100 5 L17.600 6.500 Z"/></svg>
<svg class="abs" style="left:430.8px;top:657.5px" width="20" height="20" viewBox="0 0 20 20" fill="#747474"><path d="M0.200 19.800 L1.700 14.500 L5.500 18.300 Z"/><path d="M3.500 12.400 L12 3.900 L16.100 8 L7.600 16.500 Z"/><path d="M13.500 2.400 L15 0.900 C15.600 0.300 16.400 0.300 17 0.900 L19.100 3 C19.700 3.600 19.700 4.400 19.100 5 L17.600 6.500 Z"/></svg>
<svg class="abs" style="left:430.8px;top:728.5px" width="20" height="20" viewBox="0 0 20 20" fill="#747474"><path d="M0.200 19.800 L1.700 14.500 L5.500 18.300 Z"/><path d="M3.500 12.400 L12 3.900 L16.100 8 L7.600 16.500 Z"/><path d="M13.500 2.400 L15 0.900 C15.600 0.300 16.400 0.300 17 0.900 L19.100 3 C19.700 3.600 19.700 4.400 19.100 5 L17.600 6.500 Z"/></svg>
<svg class="abs" style="left:430.8px;top:798.5px" width="20" height="20" viewBox="0 0 20 20" fill="#747474"><path d="M0.200 19.800 L1.700 14.500 L5.500 18.300 Z"/><path d="M3.500 12.400 L12 3.900 L16.100 8 L7.600 16.500 Z"/><path d="M13.500 2.400 L15 0.900 C15.600 0.300 16.400 0.300 17 0.900 L19.100 3 C19.700 3.600 19.700 4.400 19.100 5 L17.600 6.500 Z"/></svg>
<svg class="abs" style="left:862px;top:435px" width="20" height="20" viewBox="0 0 20 20" fill="#747474"><path d="M0.200 19.800 L1.700 14.500 L5.500 18.300 Z"/><path d="M3.500 12.400 L12 3.900 L16.100 8 L7.600 16.500 Z"/><path d="M13.500 2.400 L15 0.900 C15.600 0.300 16.400 0.300 17 0.900 L19.100 3 C19.700 3.600 19.700 4.400 19.100 5 L17.600 6.500 Z"/></svg>
<svg class="abs" style="left:862px;top:507px" width="20" height="20" viewBox="0 0 20 20" fill="#747474"><path d="M0.200 19.800 L1.700 14.500 L5.500 18.300 Z"/><path d="M3.500 12.400 L12 3.900 L16.100 8 L7.600 16.500 Z"/><path d="M13.500 2.400 L15 0.900 C15.600 0.300 16.400 0.300 17 0.900 L19.100 3 C19.700 3.600 19.700 4.400 19.100 5 L17.600 6.500 Z"/></svg>
<svg class="abs" style="left:862px;top:657.5px" width="20" height="20" viewBox="0 0 20 20" fill="#747474"><path d="M0.200 19.800 L1.700 14.500 L5.500 18.300 Z"/><path d="M3.500 12.400 L12 3.900 L16.100 8 L7.600 16.500 Z"/><path d="M13.500 2.400 L15 0.900 C15.600 0.300 16.400 0.300 17 0.900 L19.100 3 C19.700 3.600 19.700 4.400 19.100 5 L17.600 6.500 Z"/></svg>
<svg class="abs" style="left:862px;top:728.5px" width="20" height="20" viewBox="0 0 20 20" fill="#747474"><path d="M0.200 19.800 L1.700 14.500 L5.500 18.300 Z"/><path d="M3.500 12.400 L12 3.900 L16.100 8 L7.600 16.500 Z"/><path d="M13.500 2.400 L15 0.900 C15.600 0.300 16.400 0.300 17 0.900 L19.100 3 C19.700 3.600 19.700 4.400 19.100 5 L17.600 6.500 Z"/></svg>
<svg class="abs" style="left:500px;top:802px" width="30" height="30" viewBox="0 0 30 30"><rect width="30" height="30" rx="4.800" fill="#556a8e"/><ellipse cx="8" cy="7.800" rx="1.450" ry="1.950" fill="#fff"/><ellipse cx="22.200" cy="7.800" rx="1.450" ry="1.950" fill="#fff"/><path d="M15 8.800 C20 8.800 22.700 11.200 22.700 15 C22.700 21 19.800 28.800 15 28.800 C10.200 28.800 7.300 21 7.300 15 C7.300 11.200 10 8.800 15 8.800 Z" fill="#fff"/><path d="M11.400 12.900 C11.400 11.700 12.700 11.100 15.100 11.100 C17.500 11.100 18.800 11.700 18.800 12.900 C18.800 14.600 17.200 16 15.100 16 C13 16 11.400 14.600 11.400 12.900 Z" fill="#556a8e"/></svg>
<svg class="abs" style="left:860px;top:808px" width="24" height="24" viewBox="0 0 24 24" fill="#747474"><circle cx="9.400" cy="10" r="3.500"/><path d="M2.700 19 C2.700 16.300 5.300 15.300 8 14.200 L8 12 L10.800 12 L10.800 14.200 C13.500 15.300 16.100 16.300 16.100 19 C16.100 19.900 15.500 20.500 14.600 20.500 L4.200 20.500 C3.300 20.500 2.700 19.900 2.700 19 Z"/><path d="M13 3.700 C16.500 4 18.700 6 19.100 8.500" stroke="#747474" stroke-width="1.700" fill="none"/><path d="M11 3.400 L14 1.300 L14.200 5.600 Z"/><path d="M17 7.800 L21.100 7.400 L19.400 11 Z"/></svg>
<div class="abs" style="left:46px;top:864px;width:860px;height:47px;background:#f3f3f3;border-radius:6px"></div>
<svg class="abs" style="left:59px;top:876px" width="24" height="24" viewBox="0 0 24 24"><path d="M3 7.500 L12 16.500 L21 7.500" stroke="#747474" stroke-width="2.600" fill="none"/></svg>
<div class="card" style="left:968px;top:379px;width:910px;height:600px;box-shadow:0 2px 3px rgba(0,0,0,.12)"></div>
<div class="abs" style="left:993px;top:456px;width:860px;height:2px;background:#a8a8a8"></div>
<div class="abs" style="left:993px;top:453px;width:131px;height:5px;background:#2f7fea"></div>
<div class="abs" style="left:993px;top:476px;width:861px;height:338px;border:1px solid #c9c9c9;border-radius:7px;background:#fff;overflow:hidden"><div style="height:135px;background:#f3f3f3"></div></div>
<svg class="abs" style="left:1018px;top:500.3px" width="36" height="36" viewBox="0 0 48 48"><rect width="48" height="48" rx="5.5" fill="#41b3b0"/><rect x="8.500" y="13.800" width="30.500" height="20.200" rx="2.200" fill="#fff"/><path d="M14.500 16.900 H33 C33 18.600 34.400 20 36.200 20 V27.800 C34.400 27.800 33 29.200 33 31 H14.500 C14.500 29.200 13.100 27.800 11.300 27.800 V20 C13.100 20 14.500 18.600 14.500 16.900 Z" fill="#41b3b0"/><circle cx="23.700" cy="23.900" r="5" fill="#fff"/></svg>
<div class="abs" style="left:994px;top:560.500px;width:859px;height:1px;background:#c9c9c9"></div>
<div class="abs" style="left:994px;top:610px;width:859px;height:2px;background:#c9c9c9"></div>
<div class="abs" style="left:1788.5px;top:620px;width:30px;height:30px;border:1px solid #747474;border-radius:5px;background:#fff"></div><svg class="abs" style="left:1788.5px;top:620px" width="30" height="30" viewBox="0 0 30 30"><path d="M9 12 L21 12 L15 19.500 Z" fill="#5c5c5c"/></svg>
<div class="abs" style="left:994px;top:655.3px;width:859px;height:1.5px;background:#d4d4d4"></div>
<div class="abs" style="left:1788.5px;top:666px;width:30px;height:30px;border:1px solid #747474;border-radius:5px;background:#fff"></div><svg class="abs" style="left:1788.5px;top:666px" width="30" height="30" viewBox="0 0 30 30"><path d="M9 12 L21 12 L15 19.500 Z" fill="#5c5c5c"/></svg>
<div class="abs" style="left:994px;top:701.3px;width:859px;height:1.5px;background:#d4d4d4"></div>
<div class="abs" style="left:1788.5px;top:712px;width:30px;height:30px;border:1px solid #747474;border-radius:5px;background:#fff"></div><svg class="abs" style="left:1788.5px;top:712px" width="30" height="30" viewBox="0 0 30 30"><path d="M9 12 L21 12 L15 19.500 Z" fill="#5c5c5c"/></svg>
<div class="abs" style="left:994px;top:747.2px;width:859px;height:2px;background:#d4d4d4"></div>
<div class="abs" style="left:993px;top:832px;width:861px;height:200px;border:1px solid #c9c9c9;border-radius:7px;background:#f3f3f3"></div>
<svg class="abs" style="left:1018px;top:857px" width="36" height="36" viewBox="0 0 48 48"><rect width="48" height="48" rx="5.5" fill="#41b3b0"/><rect x="8.500" y="13.800" width="30.500" height="20.200" rx="2.200" fill="#fff"/><path d="M14.500 16.900 H33 C33 18.600 34.400 20 36.200 20 V27.800 C34.400 27.800 33 29.200 33 31 H14.500 C14.500 29.200 13.100 27.800 11.300 27.800 V20 C13.100 20 14.500 18.600 14.500 16.900 Z" fill="#41b3b0"/><circle cx="23.700" cy="23.900" r="5" fill="#fff"/></svg>
<div class="abs" style="left:994px;top:917px;width:859px;height:1px;background:#c9c9c9"></div>
<div class="abs" style="left:1564px;top:225px;width:285px;height:371px;border:1px solid #8c8c8c;border-radius:6px;background:#fff;box-shadow:0 0 0 1px rgba(0,0,0,.10),0 3px 5px rgba(0,0,0,.25)"></div>
<div class="abs" style="left:1568px;top:387px;width:279.500px;height:48px;border:5px solid #fb2e31;background:#f3f3f3"></div>
<div class="t" id="logo" style="left:118.00px;top:27.90px;font-size:29px;color:#2385d0;font-weight:bold;letter-spacing:0.20px;">請求管理ロボ</div>
<div class="t" id="srch" style="left:663.50px;top:30.85px;font-size:19.5px;color:#747474;letter-spacing:-0.89px;">検索...</div>
<div class="t" id="app" style="left:103.00px;top:93.05px;font-size:27px;color:#181818;letter-spacing:0.20px;font-weight:300;">請求管理ロボ</div>
<div class="t" id="nav0" style="left:316.90px;top:96.00px;font-size:19.5px;color:#181818;letter-spacing:1.70px;">ホーム</div>
<div class="t" id="nav1" style="left:413.00px;top:96.00px;font-size:19.5px;color:#181818;">取引先</div>
<div class="t" id="nav2" style="left:545.80px;top:96.00px;font-size:19.5px;color:#181818;letter-spacing:-0.40px;">商談</div>
<div class="t" id="nav3" style="left:660.00px;top:96.00px;font-size:19.5px;color:#181818;letter-spacing:-0.55px;">請求先部署</div>
<div class="t" id="nav4" style="left:830.60px;top:96.00px;font-size:19.5px;color:#181818;letter-spacing:0.18px;">決済情報</div>
<div class="t" id="nav5" style="left:983.30px;top:96.00px;font-size:19.5px;color:#181818;letter-spacing:-0.08px;">請求情報検索</div>
<div class="t" id="nav6" style="left:1136.10px;top:96.00px;font-size:19.5px;color:#181818;letter-spacing:-0.06px;">請求情報</div>
<div class="t" id="nav7" style="left:1288.10px;top:96.00px;font-size:19.5px;color:#181818;letter-spacing:-0.20px;">請求書</div>
<div class="t" id="nav8" style="left:1421.50px;top:96.00px;font-size:19.5px;color:#181818;letter-spacing:0.16px;">請求管理ロボ/消込</div>
<div class="t" id="nav9" style="left:1618.00px;top:96.00px;font-size:19.5px;color:#181818;letter-spacing:0.50px;">さらに表示</div>
<div class="t" id="rlbl" style="left:111.20px;top:174.20px;font-size:19.6px;color:#444;letter-spacing:-0.40px;">請求書</div>
<div class="t" id="rtitle" style="left:111.20px;top:198.10px;font-size:26.8px;color:#080707;font-weight:bold;letter-spacing:0.54px;">2025060000007</div>
<div class="t" id="b1" style="left:1487.50px;top:191.85px;font-size:19.5px;color:#0176d3;letter-spacing:-0.80px;">編集</div>
<div class="t" id="b2" style="left:1574.40px;top:191.85px;font-size:19.5px;color:#0176d3;letter-spacing:-0.60px;">削除</div>
<div class="t" id="b3" style="left:1661.10px;top:191.85px;font-size:19.5px;color:#0176d3;letter-spacing:0.12px;">請求書コピー</div>
<div class="t" id="hl0" style="left:45.20px;top:277.05px;font-size:18px;color:#444;letter-spacing:-0.50px;">取引先</div>
<div class="t" id="hl1" style="left:291.80px;top:277.05px;font-size:18px;color:#444;">請求書発行日</div>
<div class="t" id="hl2" style="left:496.00px;top:277.05px;font-size:18px;color:#444;letter-spacing:-0.32px;">請求金額合計</div>
<div class="t" id="hl3" style="left:698.20px;top:277.05px;font-size:18px;color:#444;letter-spacing:0.10px;">未消込金額</div>
<div class="t" id="hl4" style="left:887.40px;top:276.05px;font-size:18px;color:#444;letter-spacing:0.35px;">ロボで開く</div>
<div class="t" id="hl5" style="left:1087.80px;top:277.05px;font-size:18px;color:#444;letter-spacing:-0.29px;">連携済み</div>
<div class="t" id="hv0" style="left:45.20px;top:306.70px;font-size:20.6px;color:#181818;letter-spacing:-0.15px;"><a class="lnk">株式会社Sample</a></div>
<div class="t" id="hv1" style="left:291.80px;top:305.25px;font-size:21px;color:#181818;letter-spacing:0.10px;">2025/07/01</div>
<div class="t" id="hv2" style="left:496.00px;top:305.45px;font-size:20.6px;color:#181818;letter-spacing:-0.51px;">￥418,000</div>
<div class="t" id="hv3" style="left:699.50px;top:305.45px;font-size:20.6px;color:#181818;letter-spacing:-0.43px;">￥418,000</div>
<div class="t" id="hv4" style="left:886.40px;top:304.05px;font-size:21.2px;color:#0b5cab;letter-spacing:0.05px;">ロボで開く</div>
<div class="t" id="ll0" style="left:68.30px;top:409.70px;font-size:18px;color:#444;">請求書名</div>
<div class="t" id="ll1" style="left:69.30px;top:481.85px;font-size:18px;color:#444;letter-spacing:-0.70px;">取引先</div>
<div class="t" id="ll2" style="left:68.30px;top:557.00px;font-size:18px;color:#444;letter-spacing:0.14px;">決済情報</div>
<div class="t" id="ll3" style="left:68.40px;top:632.60px;font-size:18px;color:#444;letter-spacing:0.20px;">消込ステータス</div>
<div class="t" id="ll4" style="left:68.40px;top:704.05px;font-size:18px;color:#444;letter-spacing:0.50px;">決済日</div>
<div class="t" id="ll5" style="left:67.40px;top:772.85px;font-size:18px;color:#444;letter-spacing:0.42px;">エラーメッセージ</div>
<div class="t" id="ll6" style="left:68.40px;top:935.80px;font-size:18px;color:#444;letter-spacing:-0.48px;">請求書ダウンロードURL</div>
<div class="t" id="lr0" style="left:500.20px;top:409.70px;font-size:18px;color:#444;letter-spacing:-0.20px;">請求書番号</div>
<div class="t" id="lr1" style="left:500.20px;top:481.00px;font-size:18px;color:#444;letter-spacing:-0.20px;">請求先部署</div>
<div class="t" id="lr3" style="left:499.10px;top:632.35px;font-size:18px;color:#444;letter-spacing:0.04px;">未消込金額</div>
<div class="t" id="lr4" style="left:500.20px;top:703.75px;font-size:18px;color:#444;">請求書更新日</div>
<div class="t" id="lr5" style="left:500.20px;top:772.70px;font-size:18px;color:#444;letter-spacing:-0.20px;">所有者</div>
<div class="t" id="lr6" style="left:500.20px;top:934.95px;font-size:18px;color:#444;letter-spacing:-0.05px;">請求書明細件数</div>
<div class="t" id="vl0" style="left:68.30px;top:440.65px;font-size:21.4px;color:#181818;letter-spacing:-0.76px;">2025060000007</div>
<div class="t" id="vl1" style="left:68.30px;top:516.15px;font-size:20.6px;color:#181818;letter-spacing:-0.03px;"><a class="lnk">株式会社Sample</a></div>
<div class="t" id="vl2" style="left:68.30px;top:591.45px;font-size:20.6px;color:#181818;letter-spacing:-0.22px;"><a class="lnk">株式会社Sample_銀振_ｶ)ｻﾝﾌﾟﾙ</a></div>
<div class="t" id="vl3" style="left:68.40px;top:663.55px;font-size:20.6px;color:#181818;letter-spacing:0.20px;">未処理</div>
<div class="t" id="vr0" style="left:500.20px;top:441.30px;font-size:21.4px;color:#181818;letter-spacing:-0.77px;">2025060000007</div>
<div class="t" id="vr1" style="left:500.20px;top:516.05px;font-size:20.6px;color:#181818;letter-spacing:-0.04px;"><a class="lnk">株式会社Sample 御中</a></div>
<div class="t" id="vr3" style="left:501.00px;top:662.60px;font-size:20.6px;color:#181818;letter-spacing:-0.41px;">￥418,000</div>
<div class="t" id="vr5" style="left:538.30px;top:808.70px;font-size:20.6px;color:#181818;letter-spacing:-0.02px;"><a class="lnk">RP システム管理者</a></div>
<div class="t" id="sec" style="left:94.40px;top:877.60px;font-size:24px;color:#181818;letter-spacing:-0.10px;font-weight:300;">請求書情報</div>
<div class="t" id="tab1" style="left:1010.90px;top:418.15px;font-size:23.5px;color:#181818;font-weight:bold;letter-spacing:0.28px;">請求明細</div>
<div class="t" id="tab2" style="left:1178.10px;top:416.90px;font-size:24px;color:#444;letter-spacing:-0.40px;font-weight:300;">活動</div>
<div class="t" id="rt1" style="left:1071.60px;top:509.10px;font-size:23.7px;color:#181818;font-weight:bold;letter-spacing:0.23px;">請求書明細 (3)</div>
<div class="t" id="th0" style="left:1005.60px;top:575.85px;font-size:19.7px;color:#3e3e3c;font-weight:bold;letter-spacing:-0.24px;">請求書明細番号</div>
<div class="t" id="th1" style="left:1201.20px;top:575.85px;font-size:19.7px;color:#3e3e3c;font-weight:bold;letter-spacing:0.14px;">商品コード</div>
<div class="t" id="th2" style="left:1396.90px;top:575.85px;font-size:19.7px;color:#3e3e3c;font-weight:bold;letter-spacing:-0.60px;">単価</div>
<div class="t" id="r0a" style="left:1004.80px;top:625.90px;font-size:19.8px;color:#181818;letter-spacing:-0.63px;"><a class="lnk">68663071</a></div>
<div class="t" id="r0b" style="left:1397.90px;top:625.90px;font-size:19.8px;color:#181818;letter-spacing:-0.84px;">￥300,000.0000</div>
<div class="t" id="r0c" style="left:1592.90px;top:625.90px;font-size:19.8px;color:#181818;letter-spacing:-1.04px;">1.0000</div>
<div class="t" id="r1a" style="left:1004.80px;top:671.90px;font-size:19.8px;color:#181818;letter-spacing:-0.60px;"><a class="lnk">68663072</a></div>
<div class="t" id="r1b" style="left:1397.90px;top:671.90px;font-size:19.8px;color:#181818;letter-spacing:-0.90px;">￥5,000.0000</div>
<div class="t" id="r1c" style="left:1592.90px;top:671.90px;font-size:19.8px;color:#181818;letter-spacing:-0.88px;">10.0000</div>
<div class="t" id="r2a" style="left:1004.80px;top:718.60px;font-size:19.8px;color:#181818;letter-spacing:-0.60px;"><a class="lnk">68663073</a></div>
<div class="t" id="r2b" style="left:1397.90px;top:718.60px;font-size:19.8px;color:#181818;letter-spacing:-0.87px;">￥30,000.0000</div>
<div class="t" id="r2c" style="left:1592.90px;top:718.60px;font-size:19.8px;color:#181818;letter-spacing:-1.04px;">1.0000</div>
<div class="t" id="all" style="left:1374.30px;top:771.05px;font-size:20.2px;color:#0b5cab;letter-spacing:-0.04px;">すべて表示</div>
<div class="t" id="rt2" style="left:1071.10px;top:866.45px;font-size:23.7px;color:#181818;font-weight:bold;letter-spacing:0.23px;">請求書の履歴 (2)</div>
<div class="t" id="h20" style="left:1003.90px;top:932.30px;font-size:19.7px;color:#3e3e3c;font-weight:bold;letter-spacing:1.00px;">日付</div>
<div class="t" id="h21" style="left:1185.20px;top:931.30px;font-size:19.7px;color:#3e3e3c;font-weight:bold;letter-spacing:-0.40px;">項目</div>
<div class="t" id="h22" style="left:1363.40px;top:931.30px;font-size:19.7px;color:#3e3e3c;font-weight:bold;">ユーザー</div>
<div class="t" id="h23" style="left:1542.80px;top:932.30px;font-size:19.7px;color:#3e3e3c;font-weight:bold;letter-spacing:-0.20px;">元の値</div>
<div class="t" id="h24" style="left:1722.00px;top:932.30px;font-size:19.7px;color:#3e3e3c;font-weight:bold;letter-spacing:-0.12px;">新しい値</div>
<div class="t" id="m0" style="left:1583.40px;top:250.75px;font-size:18px;color:#0b5cab;letter-spacing:-0.11px;">最新消込状態の取得</div>
<div class="t" id="m1" style="left:1583.40px;top:301.45px;font-size:18px;color:#0b5cab;letter-spacing:-0.08px;">請求書データ変更</div>
<div class="t" id="m2" style="left:1583.40px;top:352.15px;font-size:18px;color:#0b5cab;letter-spacing:-0.34px;">請求書ダウンロードURL再取得</div>
<div class="t" id="m3" style="left:1583.40px;top:403.80px;font-size:18px;color:#0b5cab;letter-spacing:-0.30px;">無効化</div>
<div class="t" id="m4" style="left:1583.40px;top:455.05px;font-size:18px;color:#0b5cab;letter-spacing:-0.25px;">無効解除</div>
<div class="t" id="m5" style="left:1583.40px;top:505.70px;font-size:18px;color:#0b5cab;letter-spacing:-0.21px;">請求書メール送信</div>
<div class="t" id="m6" style="left:1583.40px;top:556.95px;font-size:18px;color:#0b5cab;letter-spacing:-0.51px;">郵送注文</div>
<div id="frame"></div>
</body>
</html>
